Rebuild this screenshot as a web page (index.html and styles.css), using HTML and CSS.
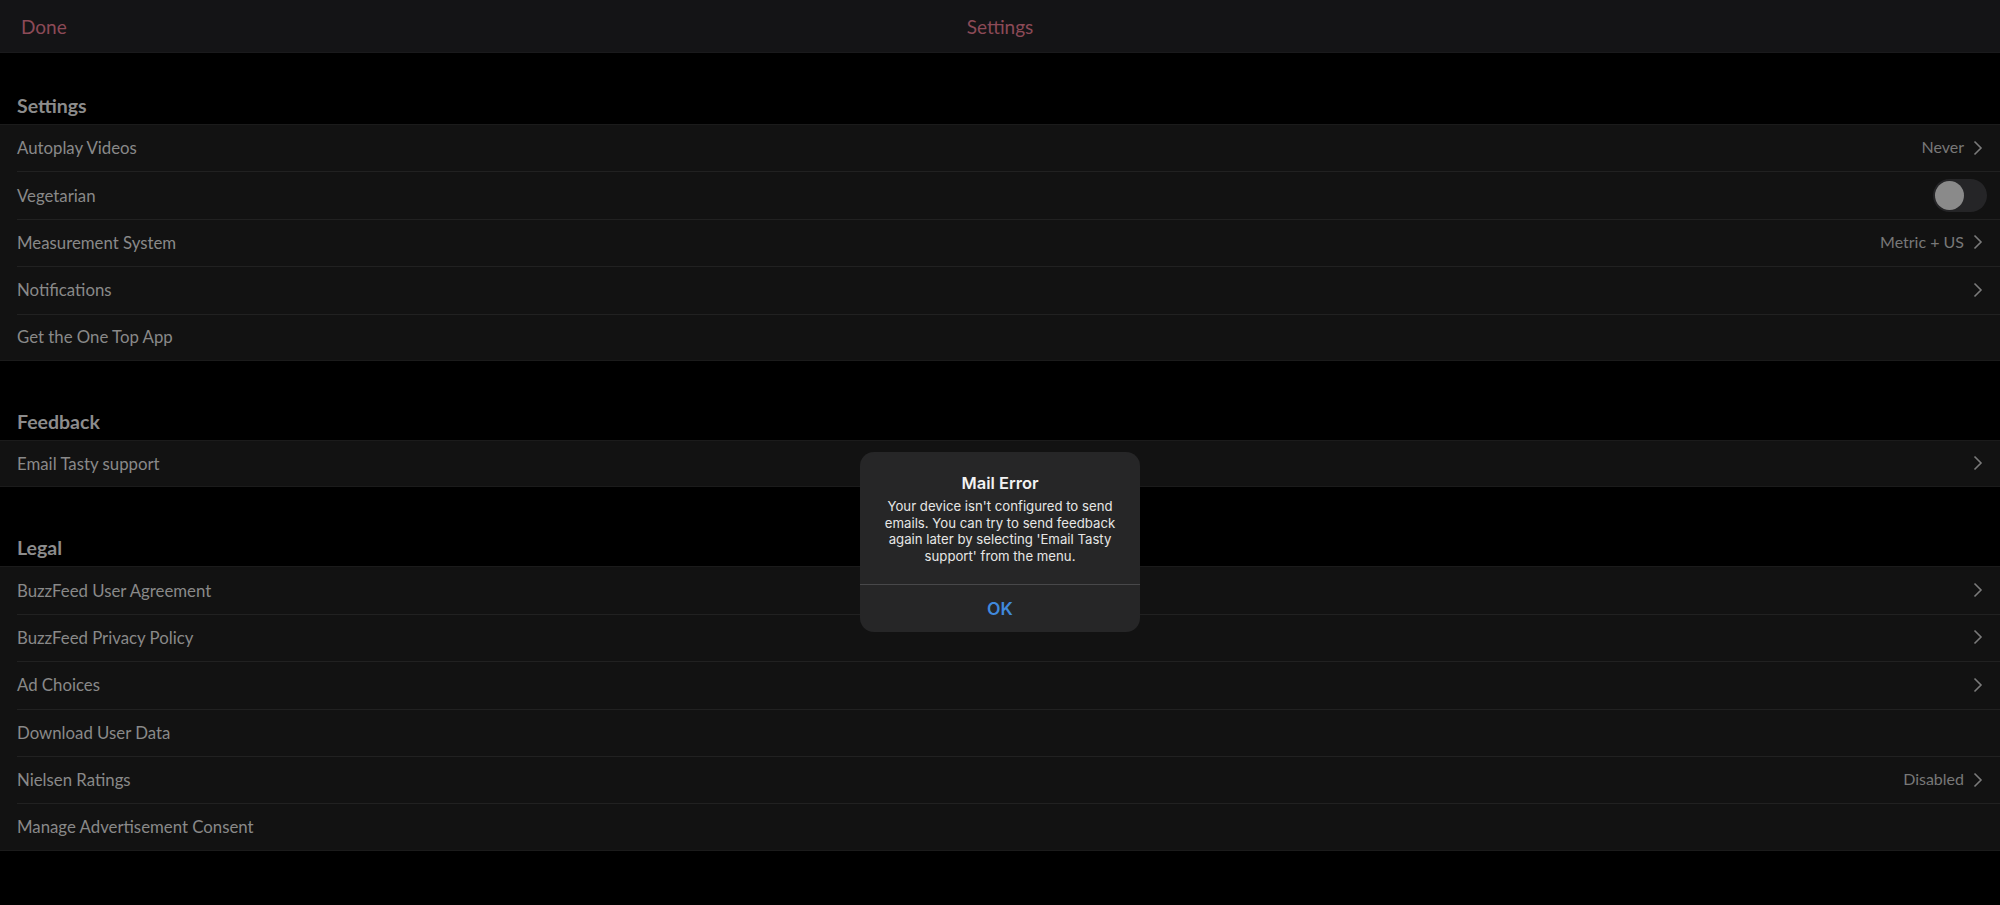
FILE: index.html
```html
<!DOCTYPE html>
<html lang="en">
<head>
<meta charset="utf-8">
<title>Settings</title>
<link rel="stylesheet" href="styles.css">
</head>
<body>
<header class="nav">
  <span class="nav-done">Done</span>
  <span class="nav-title">Settings</span>
</header>
<main class="list">
  <section class="section section-first">
    <h2 class="section-title">Settings</h2>
    <div class="group">
      <div class="row"><div class="row-inner"><span class="label">Autoplay Videos</span><span class="value">Never</span><svg class="chev" viewBox="0 0 10 16"><path d="M1.5 1.5 L8 8 L1.5 14.5"/></svg></div></div>
      <div class="row"><div class="row-inner"><span class="label">Vegetarian</span><span class="toggle"><span class="knob"></span></span></div></div>
      <div class="row"><div class="row-inner"><span class="label">Measurement System</span><span class="value">Metric + US</span><svg class="chev" viewBox="0 0 10 16"><path d="M1.5 1.5 L8 8 L1.5 14.5"/></svg></div></div>
      <div class="row"><div class="row-inner"><span class="label">Notifications</span><svg class="chev" viewBox="0 0 10 16"><path d="M1.5 1.5 L8 8 L1.5 14.5"/></svg></div></div>
      <div class="row"><div class="row-inner"><span class="label">Get the One Top App</span></div></div>
    </div>
  </section>
  <section class="section">
    <h2 class="section-title">Feedback</h2>
    <div class="group">
      <div class="row"><div class="row-inner"><span class="label">Email Tasty support</span><svg class="chev" viewBox="0 0 10 16"><path d="M1.5 1.5 L8 8 L1.5 14.5"/></svg></div></div>
    </div>
  </section>
  <section class="section">
    <h2 class="section-title">Legal</h2>
    <div class="group">
      <div class="row"><div class="row-inner"><span class="label">BuzzFeed User Agreement</span><svg class="chev" viewBox="0 0 10 16"><path d="M1.5 1.5 L8 8 L1.5 14.5"/></svg></div></div>
      <div class="row"><div class="row-inner"><span class="label">BuzzFeed Privacy Policy</span><svg class="chev" viewBox="0 0 10 16"><path d="M1.5 1.5 L8 8 L1.5 14.5"/></svg></div></div>
      <div class="row"><div class="row-inner"><span class="label">Ad Choices</span><svg class="chev" viewBox="0 0 10 16"><path d="M1.5 1.5 L8 8 L1.5 14.5"/></svg></div></div>
      <div class="row"><div class="row-inner"><span class="label">Download User Data</span></div></div>
      <div class="row"><div class="row-inner"><span class="label">Nielsen Ratings</span><span class="value">Disabled</span><svg class="chev" viewBox="0 0 10 16"><path d="M1.5 1.5 L8 8 L1.5 14.5"/></svg></div></div>
      <div class="row"><div class="row-inner"><span class="label">Manage Advertisement Consent</span></div></div>
    </div>
  </section>
</main>
<div class="alert" role="alertdialog">
  <div class="alert-body">
    <div class="alert-title">Mail Error</div>
    <div class="alert-msg">Your device isn't configured to send<br>emails. You can try to send feedback<br>again later by selecting 'Email Tasty<br>support' from the menu.</div>
  </div>
  <div class="alert-btn">OK</div>
</div>
</body>
</html>
```
FILE: styles.css
```css
* { box-sizing: border-box; }
html, body { margin: 0; padding: 0; }
body {
  background: #000;
  width: 2000px;
  height: 905px;
  overflow: hidden;
  font-family: Lato, "Liberation Sans", sans-serif;
  position: relative;
}
.nav {
  height: 53px;
  background: #141416;
  border-bottom: 1px solid #1a1a1c;
  display: flex;
  align-items: center;
  position: relative;
  padding-left: 21px;
  padding-top: 2px;
}
.nav-done, .nav-title {
  color: #8c4a57;
  font-size: 19px;
  line-height: 24px;
}
.nav-title {
  position: absolute;
  left: 50%;
  transform: translateX(-50%);
}
.list { display: flex; flex-direction: column; }
.section { margin-top: 49px; }
.section-first { margin-top: 41px; }
.section-title {
  margin: 0 0 6px;
  padding-left: 17px;
  font-size: 19.5px;
  line-height: 24px;
  font-weight: 700;
  color: #8c8c8c;
}
.group {
  background: #121212;
  border-top: 1px solid #1b1b1b;
  border-bottom: 1px solid #1b1b1b;
}
.row { padding-left: 17px; }
.row-inner {
  height: 47.4px;
  display: flex;
  align-items: center;
  padding-right: 17px;
  border-bottom: 1px solid #212121;
}
.row:last-child .row-inner { border-bottom: none; height: 45.4px; }
.label {
  flex: 1;
  font-size: 16.8px;
  color: #898989;
  margin-top: -1px;
}
.value {
  font-size: 16px;
  color: #787878;
  margin-right: 9px;
  margin-top: -3px;
}
.chev {
  width: 10px;
  height: 16px;
  fill: none;
  stroke: #7a7a7a;
  stroke-width: 1.6;
  margin-top: -1px;
}
.toggle {
  width: 54px;
  height: 33px;
  border-radius: 17px;
  background: #252527;
  display: flex;
  align-items: center;
  padding-left: 2px;
  margin-right: -4px;
}
.knob {
  width: 29px;
  height: 29px;
  border-radius: 50%;
  background: #8a8a8a;
}
.alert {
  position: absolute;
  left: 860px;
  top: 452px;
  width: 280px;
  height: 180px;
  border-radius: 14px;
  background: #262627;
  display: flex;
  flex-direction: column;
  font-family: Inter, "Liberation Sans", sans-serif;
  text-align: center;
}
.alert-body {
  flex: 1;
  padding: 20px 8px 0;
  border-bottom: 1px solid #48484a;
}
.alert-title {
  font-size: 16.5px;
  line-height: 22px;
  font-weight: 600;
  color: #f2f2f2;
}
.alert-msg {
  margin-top: 4px;
  font-size: 13.2px;
  line-height: 16.5px;
  color: #e6e6e6;
}
.alert-btn {
  height: 47px;
  display: flex;
  align-items: center;
  justify-content: center;
  font-size: 17.5px;
  font-weight: 600;
  color: #4089dc;
}
```
